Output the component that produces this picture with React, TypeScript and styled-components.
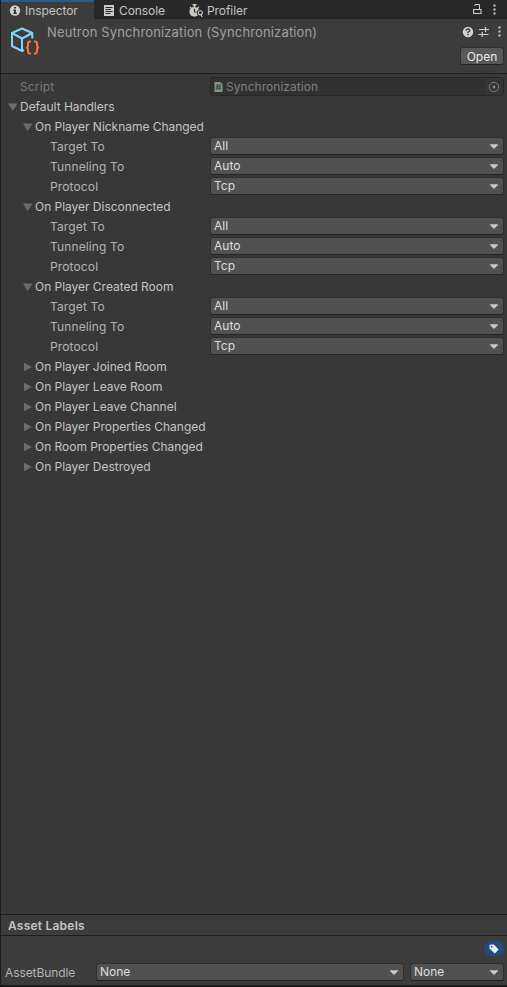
import React from "react";
import styled, { createGlobalStyle, css } from "styled-components";

const GlobalStyle = createGlobalStyle`
  * { box-sizing: border-box; }
  body { margin: 0; background: #383838; }
`;

const Window = styled.div`
  display: flex;
  flex-direction: column;
  height: 987px;
  border-left: 1px solid #1e1e1e;
  border-bottom: 2px solid #191919;
  background: #383838;
  color: #c4c4c4;
  font: 12px/20px Inter, "Liberation Sans", sans-serif;
  letter-spacing: -0.03px;
  white-space: pre;
  overflow: hidden;
`;

const TabBar = styled.div`
  display: flex;
  flex: none;
  height: 19px;
  background: #282828;
  box-shadow: inset 0 -1px #232323;
`;

const Tab = styled.div<{ $active?: boolean; $width: number }>`
  display: flex;
  align-items: center;
  gap: 4px;
  width: ${(p) => p.$width}px;
  height: 19px;
  padding: 3px 0 0 8px;
  line-height: 16px;
  letter-spacing: -0.07px;
  ${(p) =>
    p.$active &&
    css`
      margin-right: 1px;
      background: #3c3c3c;
      box-shadow: inset 0 2px #2c5d87;
    `}
`;

const TabActions = styled.div`
  display: flex;
  gap: 11px;
  margin-left: auto;
  padding: 3px 11px 0 0;
`;

const Header = styled.header`
  display: flex;
  flex: none;
  height: 55px;
  padding: 4px 3px 0 8px;
  background: #3c3c3c;
  border-bottom: 1px solid #1f1f1f;
`;

const Title = styled.div`
  margin-left: 8px;
  color: #a0a0a0;
  font-size: 13px;
  line-height: 19px;
  letter-spacing: 0.14px;
`;

const HeaderSide = styled.div`
  display: flex;
  flex-direction: column;
  align-items: flex-end;
  margin-left: auto;
`;

const HeaderIcons = styled.div`
  display: flex;
  align-items: center;
  height: 20px;
  margin: -1px -3px 5px 0;
`;

const OpenButton = styled.button`
  width: 44px;
  height: 18px;
  padding: 0;
  border: 1px solid #303030;
  border-bottom-color: #242424;
  border-radius: 3px;
  background: #585858;
  color: #e8e8e8;
  font: inherit;
  line-height: 15px;
  letter-spacing: 0;
`;

const Properties = styled.main`
  flex: 1;
  padding: 3px 3px 0 0;
`;

const Row = styled.div<{ $indent: number; $muted?: boolean }>`
  display: flex;
  height: 20px;
  padding-left: ${(p) => p.$indent}px;
  color: ${(p) => (p.$muted ? "#787878" : "inherit")};
`;

const Label = styled.span<{ $width: number }>`
  flex: none;
  width: ${(p) => p.$width}px;
  color: ${(p) => (p.color ? p.color : "inherit")};
  letter-spacing: 0.13px;
`;

const ObjectField = styled.div`
  display: flex;
  align-items: center;
  flex: 1;
  height: 19px;
  border: 1px solid #272727;
  border-radius: 3px;
  background: #313131;
  padding-left: 3px;
  color: #808080;
  letter-spacing: 0.04px;
`;

const Picker = styled.span`
  display: flex;
  align-items: center;
  justify-content: center;
  width: 18px;
  height: 17px;
  margin-left: auto;
  background: #353535;
`;

const Select = styled.div<{ $width?: number }>`
  display: flex;
  align-items: center;
  justify-content: space-between;
  flex: ${(p) => (p.$width ? "none" : "1")};
  width: ${(p) => (p.$width ? `${p.$width}px` : "auto")};
  height: 18px;
  padding: 0 5px 0 3px;
  border: 1px solid #303030;
  border-bottom-color: #242424;
  border-radius: 3px;
  background: #515151;
  color: #dedede;
  line-height: 16px;
  letter-spacing: 0;
`;

const FoldIcon = styled.svg`
  flex: none;
  width: 15px;
  height: 20px;
  fill: #6c6c6c;
`;

const LabelsHeader = styled.div`
  flex: none;
  height: 22px;
  padding-left: 7px;
  border-top: 1px solid #1f1f1f;
  border-bottom: 1px solid #1f1f1f;
  background: #3c3c3c;
  font-weight: 600;
  line-height: 21px;
  letter-spacing: 0.22px;
`;

const LabelsBody = styled.footer`
  flex: none;
  height: 49px;
  padding: 5px 3px 0 4px;
  background: #3c3c3c;
`;

const TagPill = styled.div`
  display: flex;
  align-items: center;
  justify-content: center;
  width: 20px;
  height: 15px;
  margin-left: auto;
  border-radius: 8px;
  background: #234a83;
`;

const BundleRow = styled.div`
  display: flex;
  gap: 6px;
  margin-top: 7px;
`;

const BundleLabel = styled.span`
  width: 85px;
  line-height: 20px;
  height: 18px;
  color: #b4b4b4;
  letter-spacing: -0.08px;
`;

const Spacer = styled.span<{ $width: number }>`
  flex: none;
  width: ${(p) => p.$width}px;
`;

const Caret = () => (
  <svg width="8" height="5" viewBox="0 0 8 5">
    <path d="M0 0.2h8v.8L4.6 4.6h-1.2L0 1z" fill="#c8c8c8" />
  </svg>
);

const Dots = () => (
  <svg width="3" height="14" viewBox="0 0 3 14">
    <path d="M.5 1.500h2v2h-2zM.5 5.500h2v2h-2zM.5 9.500h2v2h-2z" fill="#d0d0d0" />
  </svg>
);

const InfoIcon = () => (
  <svg width="12" height="12" viewBox="0 0 12 12">
    <circle cx="6" cy="5.500" r="5.2" fill="#d0d0d0" />
    <path d="M5 2h2v1.6H5zM4.300 4.500H7v3.300h.8v1.200H4.300V7.800H5V5.700h-.7z" fill="#383838" />
  </svg>
);

const ConsoleIcon = () => (
  <svg width="12" height="12" viewBox="0 0 12 12">
    <path d="M1 0h10v11H1z" fill="#cacaca" />
    <path d="M2.500 2.500h7M2.500 4.500h5.500M2.500 6.500h7M2.500 8.500h5" stroke="#292929" strokeWidth="1" />
  </svg>
);

const ProfilerIcon = () => (
  <svg width="14" height="14" viewBox="0 0 14 14" fill="none">
    <path d="M3.500 .8h4" stroke="#c8c8c8" strokeWidth="1.600" />
    <path d="M5.500 1v2M1 3l1.300 1M10 3L8.700 4" stroke="#c8c8c8" strokeWidth="1.500" />
    <circle cx="5.300" cy="7.800" r="4.900" fill="#c8c8c8" />
    <path d="M5.500 4.800v3.200h2" stroke="#303030" strokeWidth="1.100" />
    <circle cx="11.200" cy="8.800" r="2.300" fill="#282828" stroke="#282828" strokeWidth="2" />
    <circle cx="11.300" cy="8.800" r="2" stroke="#c8c8c8" strokeWidth="1.100" />
    <path d="M11.800 10.500l1.400 2.500" stroke="#c8c8c8" strokeWidth="1.200" />
  </svg>
);

const LockIcon = () => (
  <svg width="9" height="14" viewBox="0 0 9 14" fill="none" stroke="#d0d0d0">
    <path d="M.6 6.500h7.400v4H.6z" strokeWidth="1.100" />
    <path d="M2 3V2.300q0-.8.800-.8h2.900q.8 0 .8.800v4" strokeWidth="1.100" />
  </svg>
);

const ScriptableIcon = () => (
  <svg width="30" height="32" viewBox="0 0 30 32" fill="none">
    <path
      d="M23.300 15.500V10L13 5.500 3 10v13L13 28l2-1M3 10L13 15.500 23.300 10M13 15.500V28"
      stroke="#7fd6fd"
      strokeWidth="2"
      strokeLinejoin="round"
    />
    <path
      d="M22 18.500h-1q-2 0-2 2v2.300q0 1.700-2 1.700 2 0 2 1.800V28.500q0 2 2 2h1M25 18.500h1q2 0 2 2v2.300q0 1.700 2 1.700-2 0-2 1.800V28.500q0 2-2 2h-1"
      stroke="#ff6e40"
      strokeWidth="2"
    />
  </svg>
);

const HelpIcon = () => (
  <svg width="12" height="12" viewBox="0 0 12 12" fill="none">
    <circle cx="6" cy="6" r="5.200" fill="#d0d0d0" />
    <path d="M4.200 4.700q0-1.700 1.800-1.700t1.800 1.500Q7.800 5.500 6 6.200v1" stroke="#3c3c3c" strokeWidth="1.300" />
    <path d="M5.300 8h1.400v1.300H5.300z" fill="#3c3c3c" />
  </svg>
);

const PresetIcon = () => (
  <svg width="12" height="12" viewBox="0 0 12 12" stroke="#d0d0d0" strokeWidth="1.200">
    <path d="M1 3.500h6M8 3.500h3M7.500 1v5M0.500 8.500h3M4.500 8.500h6M4.200 6v5" />
  </svg>
);

const ScriptIcon = () => (
  <svg width="9" height="10" viewBox="0 0 9 10" fill="none">
    <path d="M.5 0h6L8.500 2v8h-8z" fill="#8a8f8a" />
    <path d="M3.700 2l-.6 6M6 2l-.6 6M2 4h5M1.800 6.200h5" stroke="#315c38" strokeWidth="1.200" />
  </svg>
);

const PickerIcon = () => (
  <svg width="12" height="12" viewBox="0 0 12 12" fill="none">
    <circle cx="6" cy="6" r="4.700" stroke="#7e7e7e" />
    <circle cx="6" cy="6" r="1.400" fill="#868686" />
  </svg>
);

const TagIcon = () => (
  <svg width="10" height="10" viewBox="0 0 10 10">
    <path
      fillRule="evenodd"
      d="M.5.700L4.800.600 9.600 5.400 5.800 9.400.500 4.600zM2.700 1.800a.9.900 0 1 0 0 1.800.9.900 0 0 0 0-1.800z"
      fill="#eef2f8"
    />
  </svg>
);

const Fold = ({ open }: { open?: boolean }) => (
  <FoldIcon viewBox="0 0 15 20">
    <path d={open ? "M3 6.500h9.500L7.750 14z" : "M4 5.700L12 10 4 14.300z"} />
  </FoldIcon>
);

const handlers = [
  { name: "On Player Nickname Changed", open: true },
  { name: "On Player Disconnected", open: true },
  { name: "On Player Created Room", open: true },
  { name: "On Player Joined Room" },
  { name: "On Player Leave Room" },
  { name: "On Player Leave Channel" },
  { name: "On Player Properties Changed" },
  { name: "On Room Properties Changed" },
  { name: "On Player Destroyed" },
];

const settings = [
  ["Target To", "All"],
  ["Tunneling To", "Auto"],
  ["Protocol", "Tcp"],
];

export default function App() {
  return (
    <Window>
      <GlobalStyle />
      <TabBar>
        <Tab $active $width={93}><InfoIcon />Inspector</Tab>
        <Tab $width={86}><ConsoleIcon />Console</Tab>
        <Tab $width={90}><ProfilerIcon />Profiler</Tab>
        <TabActions><LockIcon /><Dots /></TabActions>
      </TabBar>
      <Header>
        <ScriptableIcon />
        <Title>Neutron Synchronization (Synchronization)</Title>
        <HeaderSide>
          <HeaderIcons>
            <HelpIcon />
            <Spacer $width={4} />
            <PresetIcon />
            <Spacer $width={8} />
            <Dots />
            <Spacer $width={6} />
          </HeaderIcons>
          <OpenButton>Open</OpenButton>
        </HeaderSide>
      </Header>
      <Properties>
        <Row $indent={19} $muted>
          <Label $width={190}>Script</Label>
          <ObjectField>
            <ScriptIcon />
            <Spacer $width={3} />
            Synchronization
            <Picker><PickerIcon /></Picker>
          </ObjectField>
        </Row>
        <Row $indent={4}><Fold open />Default Handlers</Row>
        {handlers.map((h) => (
          <React.Fragment key={h.name}>
            <Row $indent={19}><Fold open={h.open} />{h.name}</Row>
            {h.open &&
              settings.map(([label, value]) => (
                <Row $indent={49} key={label}>
                  <Label $width={160} color="#b4b4b4">{label}</Label>
                  <Select>{value}<Caret /></Select>
                </Row>
              ))}
          </React.Fragment>
        ))}
      </Properties>
      <LabelsHeader>Asset Labels</LabelsHeader>
      <LabelsBody>
        <TagPill><TagIcon /></TagPill>
        <BundleRow>
          <BundleLabel>AssetBundle</BundleLabel>
          <Select>None<Caret /></Select>
          <Select $width={94}>None<Caret /></Select>
        </BundleRow>
      </LabelsBody>
    </Window>
  );
}
